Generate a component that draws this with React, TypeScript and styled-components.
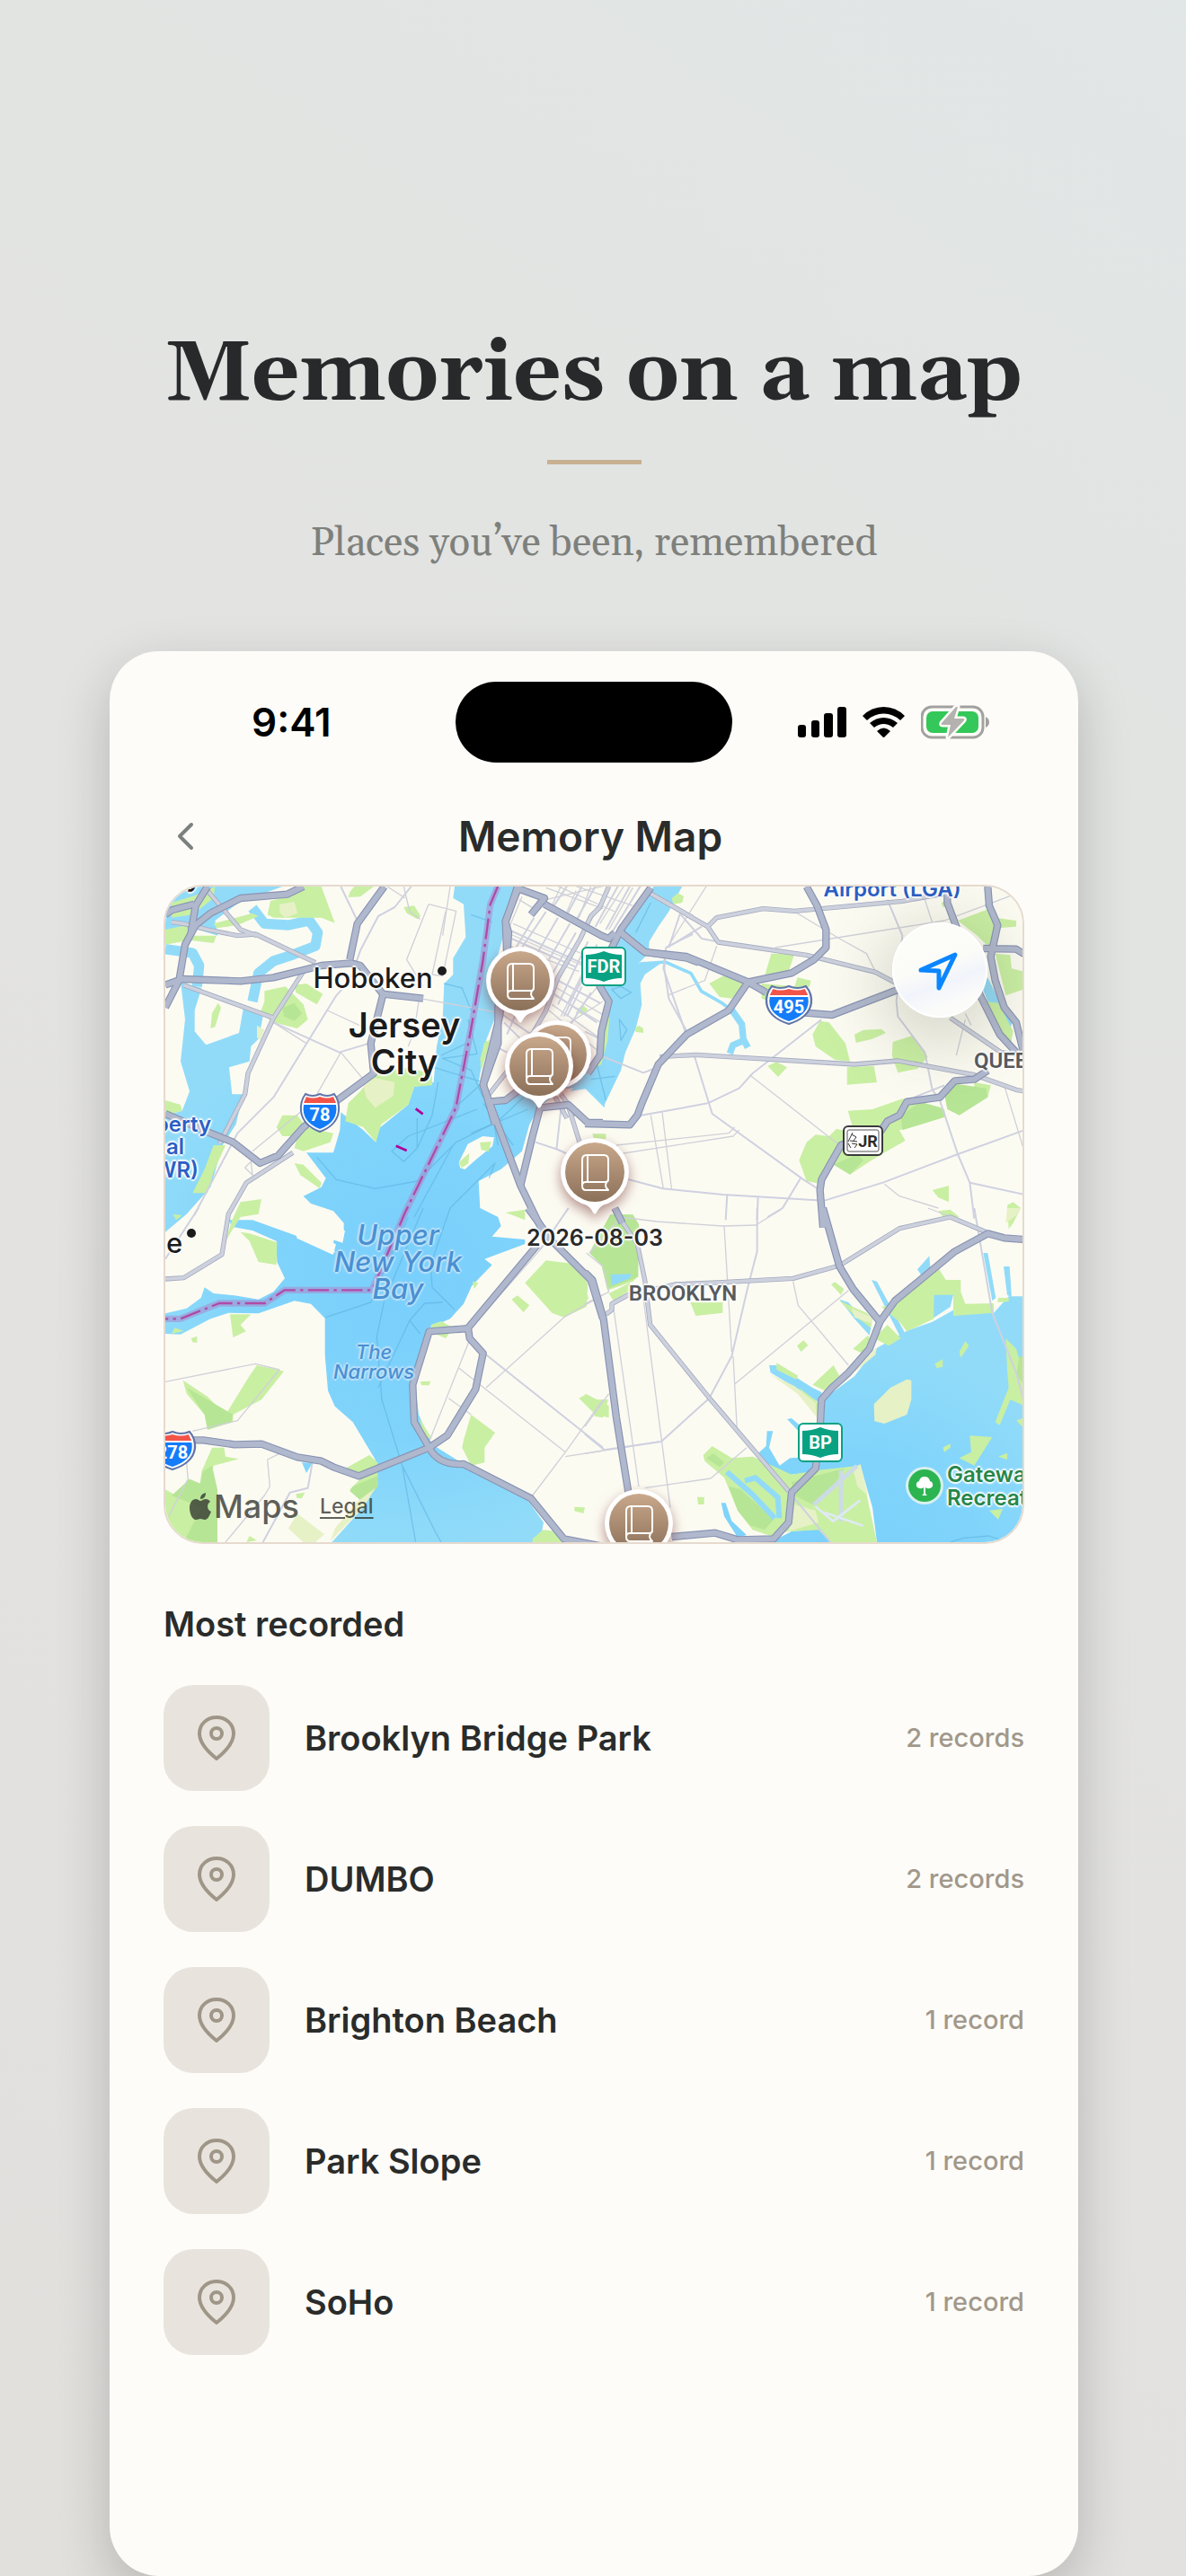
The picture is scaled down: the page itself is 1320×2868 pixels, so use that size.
import React from "react";
import styled, { createGlobalStyle } from "styled-components";

const GlobalStyle = createGlobalStyle`
  *, *::before, *::after { box-sizing: border-box; }
  body {
    margin: 0;
    background: #e3e3e1;
    font-family: Inter, "Liberation Sans", sans-serif;
    color: #2a2c2b;
  }
  button { font: inherit; color: inherit; padding: 0; border: 0; background: none; cursor: pointer; }
  h1, h2, p, ul { margin: 0; padding: 0; }
`;

const Page = styled.div`
  display: flex;
  flex-direction: column;
  min-height: 100vh;
  padding: 0 120px 0 122px;
  background: linear-gradient(215deg, #e1e6e6 0%, #e2e4e2 25%, #e3e3e2 45%, #e2e1df 75%, #e1e0dd 100%);
`;

const Intro = styled.header`
  display: flex;
  flex-direction: column;
  align-items: center;
  padding: 358px 0 90px;
  text-align: center;
`;

const Headline = styled.h1`
  font: 700 94px/120px Georgia, Gelasio, "Liberation Serif", serif;
  color: #28292b;
  white-space: nowrap;
`;

const Rule = styled.hr`
  width: 105px;
  height: 5px;
  margin: 34px 0 58px;
  border: 0;
  background: #c8b091;
`;

const Tagline = styled.p`
  font: 400 44px/60px Georgia, Gelasio, "Liberation Serif", serif;
  color: #7e807c;
`;

const Phone = styled.main`
  flex: 1;
  padding: 34px 60px 60px;
  border-radius: 55px;
  background: #fdfcf8;
  box-shadow: 0 20px 60px rgba(0, 0, 0, 0.2);
`;

const StatusBar = styled.div`
  display: grid;
  grid-template-columns: 1fr 308px 1fr;
  align-items: center;
  height: 90px;
`;

const Clock = styled.time`
  padding-left: 98px;
  font-size: 44px;
  font-weight: 600;
  color: #000;
`;

const Island = styled.div`
  height: 90px;
  border-radius: 45px;
  background: #000;
`;

const StatusIcons = styled.div`
  display: flex;
  align-items: center;
  justify-content: flex-end;
  gap: 18px;
  padding-right: 38px;
`;

const NavBar = styled.nav`
  display: grid;
  grid-template-columns: 48px 1fr 56px;
  align-items: center;
  height: 72px;
  margin: 46px 0 18px;
`;

const BackButton = styled.button`
  display: flex;
  align-items: center;
  justify-content: center;
  height: 72px;
`;

const ScreenTitle = styled.h2`
  font-size: 46px;
  line-height: 72px;
  font-weight: 600;
  text-align: center;
`;

const MapCard = styled.section`
  position: relative;
  height: 734px;
  overflow: hidden;
  border: 2px solid #e6dace;
  border-radius: 44px;
  background: #fcfbf2;
`;

const MapCanvas = styled.svg`
  display: block;
  width: 100%;
  height: 100%;
`;

type Tone = "city" | "district" | "water" | "airport" | "park" | "date";
const toneColor: Record<Tone, string> = {
  city: "#1b1b1b",
  district: "#575b5e",
  water: "#4a90d2",
  airport: "#2b5fc4",
  park: "#26864a",
  date: "#2a2a2a",
};

const MapLabel = styled.span<{ $x: number; $y: number; $size: number; $line: number; $tone: Tone; $anchor?: "start" | "middle" | "end"; $bold?: boolean }>`
  position: absolute;
  left: ${(p) => p.$x}px;
  top: ${(p) => p.$y}px;
  transform: translate(${(p) => (p.$anchor === "start" ? "0" : p.$anchor === "end" ? "-100%" : "-50%")}, -50%);
  font-family: ${(p) => (p.$tone === "district" ? "Roboto, sans-serif" : "Inter, sans-serif")};
  font-size: ${(p) => p.$size}px;
  line-height: ${(p) => p.$line}px;
  font-weight: ${(p) => (p.$bold ? 600 : 500)};
  font-style: ${(p) => (p.$tone === "water" ? "italic" : "normal")};
  color: ${(p) => toneColor[p.$tone]};
  text-align: ${(p) => (p.$anchor === "start" ? "left" : "center")};
  white-space: pre;
  text-shadow: ${(p) => {
    const c = p.$tone === "water" ? "rgba(190,226,248,0.9)" : "rgba(255,255,255,0.85)";
    return `2px 0 1px ${c}, -2px 0 1px ${c}, 0 2px 1px ${c}, 0 -2px 1px ${c}, 0 0 4px ${c}`;
  }};
`;

const CityDot = styled.i<{ $x: number; $y: number }>`
  position: absolute;
  left: ${(p) => p.$x - 5}px;
  top: ${(p) => p.$y - 5}px;
  width: 10px;
  height: 10px;
  border-radius: 50%;
  background: #1b1b1b;
`;

const Marker = styled.button<{ $x: number; $y: number }>`
  position: absolute;
  left: ${(p) => p.$x - 50}px;
  top: ${(p) => p.$y - 50}px;
  width: 100px;
  height: 110px;

  svg { display: block; overflow: visible; filter: drop-shadow(0 6px 7px rgba(110, 40, 40, 0.5)); }
`;

const Sign = styled.svg<{ $x: number; $y: number }>`
  position: absolute;
  left: ${(p) => p.$x}px;
  top: ${(p) => p.$y}px;
  overflow: visible;
  font-family: Roboto, Inter, sans-serif;
  font-weight: 700;
`;

const LocateButton = styled.button`
  position: absolute;
  top: 40px;
  right: 39px;
  display: flex;
  align-items: center;
  justify-content: center;
  width: 106px;
  height: 106px;
  border: 2px solid #ffffff;
  border-radius: 50%;
  background: linear-gradient(160deg, #fdfdf8 0%, #fbfbf8 45%, #f1f4fb 62%, #fbfbfa 80%);
  box-shadow: 0 16px 70px 16px rgba(90, 90, 70, 0.22);
`;

const Attribution = styled.div`
  position: absolute;
  left: 27px;
  bottom: 18px;
  display: flex;
  align-items: center;
  gap: 3px;
  color: rgba(50, 52, 46, 0.78);
`;

const MapsWord = styled.span`
  font-size: 36px;
  line-height: 44px;
  font-weight: 500;
`;

const LegalLink = styled.a`
  margin-left: 20px;
  font-size: 23px;
  line-height: 44px;
  font-weight: 500;
  color: inherit;
  text-underline-offset: 4px;
`;

const SectionTitle = styled.h2`
  margin: 64px 0 43px;
  font-size: 38px;
  line-height: 50px;
  font-weight: 600;
`;

const PlaceList = styled.ul`
  display: flex;
  flex-direction: column;
  gap: 39px;
  list-style: none;
`;

const PlaceRow = styled.li`
  display: flex;
  align-items: center;
  gap: 39px;
`;

const PlaceTile = styled.span`
  display: flex;
  align-items: center;
  justify-content: center;
  width: 118px;
  height: 118px;
  border-radius: 33px;
  background: #e8e4dd;
`;

const PlaceName = styled.span`
  flex: 1;
  font-size: 38px;
  line-height: 50px;
  font-weight: 600;
`;

const PlaceCount = styled.span`
  font-size: 29px;
  line-height: 40px;
  font-weight: 500;
  color: #a1988b;
`;

/* ---------- map data: four survey tiles and a close-up of Manhattan ---------- */

type Tile = {
  offset: [number, number];
  water?: string[];
  creeks?: string[];
  park?: string[];
  wood?: string[];
  sand?: string[];
  ferry?: string[];
  thin?: string[];
  minor?: string[];
  mid?: string[];
  major?: string[];
};

const tiles: Tile[] = [
  {
    offset: [-39, -36],
    water: [
      "M39,36 H430 L360,62 L290,85 L205,150 L215,200 L130,175 L39,200Z",
      "M1005,36 L1000,75 L1035,95 L1042,205 L1000,275 V330 L970,360 L965,480 L945,570 L935,690 L870,705 L850,765 L745,850 L742,890 L700,850 L625,790 L622,850 L600,925 L510,925 L575,1010 L560,1040 L500,1070 L525,1095 L600,1120 L635,1160 V1195 L600,1220 L605,1260 L470,1200 L330,1150 L252,1150 L260,1172 L330,1185 L410,1220 L412,1290 L438,1345 L400,1390 L350,1415 L270,1402 L200,1395 L170,1375 L158,1410 L110,1445 L39,1462 V1530 L90,1532 L190,1480 L250,1460 L350,1462 L470,1420 L525,1430 L572,1478 V1600 L582,1720 L605,1772 L665,1825 L740,1950 L748,2030 L700,2110 L595,2226 H1290 L1302,2160 L1245,2080 L1160,2015 L1040,1968 L930,1900 L885,1800 L870,1670 L920,1510 L990,1480 L1035,1430 L1062,1370 L1130,1300 L1105,1280 L1240,1230 V1215 L1130,1205 L1160,1170 L1150,1140 L1090,1110 L1085,1020 L1160,980 L1230,920 L1255,830 L1290,770 L1370,710 L1440,710 L1505,775 L1520,640 L1400,650 L1290,700 L1180,740 L1130,765 L1085,690 L1110,550 L1150,450 L1140,300 L1165,210 L1165,150 L1210,36Z",
      "M90,355 L160,375 L137,450 V520 L175,565 L285,525 L300,440 L365,470 L350,545 L325,570 L320,620 L252,640 L262,730 L298,730 L275,830 L230,900 L190,1040 L110,1130 L39,1190 V800 L95,785 L120,720 L90,620 L105,480Z",
    ],
    creeks: [
      "M330,108 L370,160 L450,165 L520,150 L548,190 L540,235 L470,262 L400,285 L350,325 L330,420",
      "M39,245 L130,258 L152,300 L145,370",
    ],
    park: [
      "M440,70 L500,36 H560 L605,158 L560,140 L400,140 L380,130 L390,85Z",
      "M655,55 L670,36 H735 L690,70 L650,72Z",
      "M39,180 L110,165 L120,200 L210,200 L200,225 L120,215 L39,230Z",
      "M200,160 L330,125 L350,135 L280,165 L210,175Z",
      "M60,90 L140,65 L205,36 L200,75 L130,130 L60,140Z",
      "M835,105 L870,100 L892,135 L880,145 L845,125Z",
      "M370,385 L440,370 L500,430 L515,480 L480,510 L400,490 L355,460 L370,420Z",
      "M470,365 L510,360 L565,395 L545,430 L475,390Z",
      "M215,425 L225,440 L205,505 L190,510 L195,460Z",
      "M730,670 L830,640 L930,660 V700 L870,705 L850,765 L760,830 L742,890 L700,840 L640,820 L650,760 L690,720Z",
      "M410,840 L430,800 L480,800 L510,840 L600,860 L590,890 L500,920 L470,910 L480,870 L430,870Z",
      "M200,900 L240,900 L200,990 L180,1060 L130,1060 L170,980Z",
      "M470,960 L500,965 L560,1025 L555,1045 L490,1000Z",
      "M290,1090 L360,1080 L350,1130 L290,1140 L240,1220 L262,1150Z",
      "M1110,550 L1120,560 L1095,650 L1090,610Z",
      "M1415,450 L1430,435 L1450,448 L1430,465Z",
      "M39,750 L90,765 L95,785 L39,800Z",
      "M290,1190 L320,1195 L412,1225 L410,1300 L350,1290 L320,1220Z",
    ],
    wood: ["M430,440 L470,425 L495,460 L470,485 L435,470Z"],
    sand: ["M420,95 L470,88 L480,125 L440,140 L422,125Z", "M345,500 L370,515 L355,550 L345,540Z", "M700,700 L740,675 L805,690 L800,735 L740,775 L710,740Z"],
    thin: [
      "M918,95 L1010,118 L965,335 L930,330 L975,118 M918,95 L845,280 L900,370",
      "M990,36 L965,200 M835,36 L855,120 L890,145",
      "M580,450 L720,515 M545,730 L625,590 L700,680 M510,560 L400,490",
      "M885,420 L870,520 L850,570 M890,410 L1140,455",
      "M330,920 L490,790 M305,975 L325,955 L330,1000Z",
      "M780,36 L840,75",
    ],
    minor: [
      "M625,36 L680,150 M860,36 L805,105 L750,135 L690,250 L655,350 L610,400 L520,545 L400,740 L280,860 L135,1135",
      "M400,490 L620,590 L720,560",
      "M1275,890 L1350,915 L1450,960 M1360,780 L1345,915",
    ],
    mid: [
      "M60,155 L100,160 L180,180 L280,200 L340,195 L540,290",
      "M180,50 L290,180 L345,200",
      "M100,365 L400,475 L500,320 M400,475 L315,660 L305,730 L220,895",
      "M465,925 L310,1025 L250,1130 L228,1265 L100,1343 L39,1347",
      "M1385,770 L1425,900",
    ],
    major: [
      "M500,36 L445,62 L290,75 L190,125 L140,165 L105,230 L85,350 L39,440",
      "M180,36 L140,100 L125,190 M39,130 L60,115 L135,95",
      "M39,365 L95,345 L290,352 L400,340 L560,300 L660,292 L690,300 L765,395 L900,410",
      "M770,36 L680,160 L655,280 M765,400 L725,560 L735,660 L620,745 L500,840 L415,935 L355,960 L265,890 L190,860 L39,795",
      "M1215,36 L1175,155 L1185,190 L1178,300 L1150,440 L1150,560 L1100,700 L1225,1035 L1310,1210",
      "M1120,755 L1175,750 L1240,700 M1225,1035 L1265,870 L1290,775 L1385,765 L1450,825 H1500",
    ],
    ferry: [
      "M1060,130 L1130,155 M970,360 L1030,375 L1060,450 M1050,480 L1080,595 L965,610 L1060,650 L1100,740 M960,600 L1045,560 M935,640 L1100,690 L1000,780 M950,690 L930,800 L880,910 V810 M880,910 L835,955 L795,920 L850,870 L1080,780",
      "M545,940 L610,1015 L740,1045 L880,1020 L1010,890 L1150,820 L1235,740 M870,1140 L1000,900 M990,1110 L1140,960 L1120,1010",
      "M1120,740 L1150,900 M1100,760 L1200,900 M1060,860 L1250,780",
    ],
  },
  {
    offset: [1041, -6],
    water: [
      "M590,5 H685 L640,90 L605,140 L575,190 L572,230 L540,262 L620,258 L560,300 L545,330 L550,400 L530,480 L495,560 L480,620 L425,735 L370,680 L310,690 L370,640 L410,590 L430,480 L445,400 L415,340 L440,250 L480,160Z",
    ],
    creeks: [],
    park: ["M650,45 L670,28 L690,38 L685,60 L655,65Z", "M527,480 L540,470 L555,480 V495 L530,492Z", "M338,412 L355,404 L368,415 L350,434 L336,425Z", "M22,530 L42,518 L30,570 L10,610Z", "M425,450 L442,440 L436,520 L415,600 L395,610Z"],
    thin: [
      "M140,50 L190,80 M150,40 L100,160 M230,50 L420,5 M250,70 L280,5 M300,90 L330,20 M340,110 L380,5 M380,120 L440,5 M410,130 L490,5 M440,150 L520,10 M230,10 L420,80 M270,5 L460,90 M330,5 L520,70",
      "M110,165 L420,300 M120,130 L440,270 M110,205 L340,290 M240,330 L430,440 M260,370 L430,470 M250,400 L420,520 M240,420 L410,560",
      "M300,400 L400,250 M330,430 L410,330 M280,440 L370,260 M310,460 L420,390",
    ],
    minor: [
      "M105,150 L350,262 M115,180 L330,275 M190,110 L130,210 M230,90 L150,210 M270,110 L200,230 M310,130 L240,250 M330,160 L250,300",
      "M300,5 L250,80 M350,5 L300,100 M395,5 L330,120 M470,5 L395,140 M510,5 L430,150 M545,5 L450,160",
      "M270,320 L410,395 M250,360 L400,460 M370,190 L270,400 M400,200 L290,440 M350,340 L300,440 M380,360 L310,470",
      "M80,430 L180,500 M90,460 L150,520 M130,430 L100,500 M60,540 L100,560",
      "M410,570 L555,628 L590,615 M630,210 L625,280 L640,380 L700,490 M630,210 L720,165 M680,90 L640,210",
    ],
    mid: ["M440,5 L410,75 L380,105 L345,180 L270,310 L230,420 L150,560 L40,700", "M580,30 L720,110", "M250,690 L300,780 M280,700 L330,770"],
    major: [
      "M60,800 L20,665 L75,440 L100,250 L95,120 L135,18",
      "M135,12 L225,45 L180,100 M225,65 L415,170 L440,180 L460,160",
      "M580,10 L480,150 L440,230 L410,340 L440,390 L415,490 L410,570 L370,630",
      "M480,160 L560,225 L700,245 L740,260",
    ],
    ferry: ["M450,350 L480,340 L515,360 L480,380Z M475,450 L500,485 L480,520Z M580,60 L530,160 M380,650 L460,640 M400,600 L430,720"],
  },
  {
    offset: [1401, -36],
    water: ["M1325,370 L1345,340 L1380,410 L1400,450 L1430,480 L1415,525 L1385,500 L1375,460 L1345,420Z"],
    creeks: [],
    park: [
      "M622,260 H700 L680,320 L620,345 L600,335Z",
      "M415,360 L460,335 L520,345 L530,370 L490,410 L450,405Z",
      "M590,360 L700,370 L710,340 L755,350 L750,370 L620,420 L590,410Z",
      "M760,530 L785,485 L815,490 L870,560 L885,620 L835,615 L770,570Z",
      "M900,530 L930,515 L990,512 L1005,525 L960,545 L905,558Z",
      "M1028,555 L1090,535 L1130,580 L1145,605 L1110,645 L1045,658 L1025,600Z",
      "M610,635 L640,622 L675,640 L645,672Z",
      "M875,640 L965,635 L975,690 L875,698Z",
      "M1245,150 L1350,110 L1370,140 L1440,150 V170 L1380,175 L1350,240 L1310,200Z",
      "M1370,260 L1420,265 L1425,310 L1465,320 V380 L1405,400Z",
      "M1340,420 L1380,425 L1430,520 L1420,570 L1360,480Z",
      "M878,785 L960,780 L1060,745 L1200,780 L1205,805 L1050,850 L1070,885 L1000,925 L950,955 L885,998 L830,960 L790,1030 L740,1020 L715,950 L740,890 L770,865 L815,870 L840,845 L900,860Z",
      "M1300,690 L1355,700 L1345,740 L1300,720Z",
      "M1160,1050 L1215,1035 V1090 L1180,1075Z",
      "M1190,90 L1220,80 V100 L1195,105Z",
      "M25,862 H70 V880 H30Z",
      "M1410,1100 L1430,1090 L1455,1110 L1430,1160 L1415,1180Z",
    ],
    wood: ["M1200,730 L1240,695 L1340,710 L1345,740 L1250,800 L1210,780Z", "M1055,800 L1120,755 L1190,775 L1205,805 L1060,850Z", "M830,965 L910,930 L930,950 L885,998Z"],
    thin: [
      "M405,36 L275,240 M700,120 L850,210 L940,260 L970,320 M440,235 L400,350 L275,400 M635,240 L1200,150 L1467,50",
      "M550,665 L850,900 M220,800 L262,1045 M258,790 L290,1050 M105,900 L480,860 L500,840 M110,930 L495,870 L515,850",
      "M1240,600 L1270,480 M1135,80 L1200,280 M1400,700 L1467,920 M1000,1030 L1050,1070 L1180,1110",
      "M1270,460 L1290,500",
    ],
    minor: [
      "M180,802 L410,760 L515,710 L560,660 L790,480 M365,600 L425,795 L730,1015 L785,1050",
      "M275,240 L390,170 M320,130 L390,210 L440,220 M270,250 L262,310 L335,520",
      "M130,1010 L260,1045 L460,1065 L800,1085 L995,1025 L1245,930 L1467,850 M1245,930 L1285,1025 L1300,1145",
      "M1010,80 L1060,200 L1040,420 L1045,470 L1135,590 L1160,715 L1185,750 L1245,930 M1285,1025 L1467,1065",
      "M475,1065 L470,1150 M578,1070 L575,1150 M720,1010 L660,1110 L610,1140",
      "M1100,740 L1200,700 M0,520 L60,550",
    ],
    mid: [
      "M220,60 L410,170 L440,140 L595,110 L700,118 L1060,85 L1200,60 M410,170 L445,222 L740,265 L970,322 L1060,370",
      "M250,605 L370,598 L900,630 L1045,618 L1300,665 L1440,715 L1467,720",
      "M1220,475 L1390,590 L1467,600",
    ],
    major: [
      "M740,36 L775,100 L805,180 L805,240 L765,280 L690,325 L545,355 L605,390 M545,355 L340,270 L200,255 L120,190",
      "M545,355 L480,450 L340,530 L245,630 L190,760 L175,800 L150,832 L0,828",
      "M700,455 L825,465 L1060,375",
      "M1345,36 L1350,100 L1378,165 L1355,270 L1370,350 L1400,440 L1440,490 L1467,600 M1210,36 V90 L1240,170 L1320,400 L1385,530 L1440,590 M1330,243 L1440,245 L1467,262",
      "M795,1175 L785,1050 L790,1015 L855,900 L990,850 L1010,820 L1050,800 L1075,755 L1185,740 L1235,685 L1300,680 L1345,650",
    ],
  },
  {
    offset: [-39, 1074],
    water: ["M325,580 L365,535 L388,545 L365,600 L335,612Z", "M495,850 L530,852 L510,885Z"],
    park: [
      "M98,575 L180,630 L240,690 L320,560 L345,525 L435,545 L360,640 L265,690 L265,715 L180,740 L170,690 L110,620Z",
      "M255,355 H325 L290,390 L308,412 L265,432Z",
      "M125,435 L145,428 V450 L130,448Z",
      "M60,420 L100,410 L70,400Z",
      "M195,800 L235,800 L240,830 L285,838 L200,860 L190,910 L213,940 V1116 H70 L39,1040 V940 L75,960 L120,905 L155,920 L160,880Z",
      "M640,870 L720,825 L748,850 V930 L700,985 L655,940 L690,905Z",
      "M320,1095 L345,1110 L310,1116Z", "M475,955 L505,950 L495,970 L478,968Z",
      "M1240,250 L1310,175 L1395,185 L1450,250 L1445,330 L1370,365 L1330,350Z",
      "M1195,305 L1215,292 L1255,325 L1235,348Z",
      "M1035,775 L1060,690 L1140,750 L1105,800 L1105,850 L1060,860 L1030,800Z",
      "M885,700 L930,770 L905,765Z", "M890,580 L925,578 L920,592 L895,592Z", "M925,390 L960,378 L1000,400 L975,435 L940,420Z",
      "M1420,635 L1445,622 L1520,660 V700 L1475,690Z", "M1405,998 L1440,1000 L1435,1020 L1405,1012Z",
      "M1265,1105 L1300,1075 L1350,1080 L1370,1116 H1265Z",
      "M1175,15 L1240,5 V40Z", "M1065,245 L1085,250 L1070,270Z", "M65,20 L95,25 L75,40Z",
    ],
    wood: ["M665,930 L748,895 V930 L700,985 L655,945Z", "M60,960 L120,905 L155,920 L165,880 L195,860 L213,940 V1116 H100 L160,1000Z", "M110,600 L180,640 L265,690 L260,715 L180,740 L170,690Z"],
    sand: ["M450,1070 L480,1020 L570,1090 L540,1116 H500Z", "M740,935 L700,1000 L590,1112 L605,1070 L680,980Z"],
    thin: [
      "M39,580 L340,520 L420,540 L280,710 L130,745 M110,850 L115,905 L50,1030 M420,820 L380,840 L388,930 L370,960 L240,1116",
      "M1290,140 L1060,400 M1055,440 L920,780 M1020,535 L1375,815 L1265,960 M985,635 L1060,690 M1375,830 L1500,810 M1110,600 L1370,365 L1500,290 M1375,815 L1500,640",
    ],
    minor: ["M530,850 L515,935 L455,950 L365,1116", "M150,0 L39,170", "M1110,490 L1500,800", "M1385,0 L1290,140"],
    major: [
      "M130,775 L165,775 L270,790 L360,788 L480,832 L560,845 L600,865 L685,895 L920,800 L980,760 L1075,605 L1100,485 L1055,435 L1050,400 L1280,125",
      "M920,800 L870,715 L865,590 L920,412 L1055,402",
      "M920,800 Q950,860 1035,855 L1260,970 L1370,1105 L1500,1130",
      "M1250,0 L1330,110 L1460,240 L1500,370",
    ],
    ferry: ["M575,365 L725,315 L850,30 M900,0 L770,310 L745,430 L762,640 L830,860 L940,1080 L960,1116 M830,860 L875,1116 M990,0 L925,190 L930,265 L1005,340 M890,420 L855,375 L905,318 L965,315 M855,375 L750,600"],
  },
  {
    offset: [1401, 1074],
    water: [
      "M780,655 L820,620 L900,562 L970,470 L1075,410 L1160,380 L1240,335 L1365,350 L1415,295 H1467 V1116 H975 L960,1000 L920,860 L780,880 L690,890 L640,885 L600,855 L575,822 L605,795 L608,745 H628 L615,800 L650,860 L685,835 L790,830Z",
      "M620,1116 L690,1080 L790,1072 L825,1116Z",
      "M1110,205 L1150,160 L1155,220 L1200,260 L1235,270 L1220,330 L1160,370 L1165,290 L1120,220Z",
      "M1330,150 H1345 L1372,300 L1360,310Z", "M1398,195 H1418 L1425,300 L1410,290Z",
      "M85,222 L155,220 L150,235 L90,258Z",
      "M615,525 L640,525 L760,600 L790,615 V655 L720,610 L620,550Z",
      "M675,705 L690,702 L740,745 L710,742Z",
      "M850,305 L880,315 L955,400 L950,425 L900,370Z", "M957,240 L975,245 L1070,420 L1050,425Z",
      "M455,985 H470 L490,1045 L540,1092 L510,1100 L465,1030Z",
    ],
    creeks: [],
    park: [
      "M85,22 L160,22 L180,55 L175,230 L160,245 L75,275 L55,190 L15,150Z", "M80,285 L150,250 V275 L95,310Z",
      "M352,315 H460 V350 L370,360Z", "M822,255 L835,247 L865,270 L855,290Z", "M708,460 L730,442 L745,458 L722,480Z",
      "M1180,10 L1220,5 L1250,30 L1200,35Z",
      "M1040,320 L1180,200 L1205,240 H1255 V280 L1270,320 L1365,318 V350 L1230,360 V290 L1165,290 L1165,370 L1075,412 L1050,380 L990,330Z",
      "M1380,300 H1415 V312 L1378,315Z",
      "M980,420 L1010,390 L1055,435 L1015,460 L975,440Z",
      "M895,470 L945,425 L960,450 L935,490Z", "M760,590 L830,525 L850,560 L800,610Z", "M640,517 L712,560 L705,572 L640,540Z",
      "M850,310 L940,350 L960,370 L955,400 L900,360Z",
      "M715,600 L780,650 V700 L750,650Z",
      "M395,825 L425,795 L490,835 L560,830 L690,890 L780,875 L920,860 L975,1116 H820 L780,1075 L680,1080 L620,1095 L560,1075 L510,1010 L465,900 L400,845Z",
      "M375,965 H398 V990 H378Z",
      "M1405,435 L1440,470 L1467,560 V660 L1420,640 L1385,725 L1370,715 L1415,600 L1410,540Z",
      "M1285,760 L1360,765 L1300,860 L1250,835 L1290,815Z", "M1168,520 L1195,505 V530 L1175,535Z", "M1270,445 L1282,460 L1255,500 L1250,480Z", "M1195,800 L1220,787 V800 L1200,815Z", "M1380,830 L1410,818 V840Z", "M1350,1010 L1395,1005 L1380,1040Z",
      "M0,620 L30,640 L78,640 L60,700 L30,695 L45,665 L0,650Z",
      "M0,270 L12,300 L0,320Z", "M1440,710 L1467,700 V735Z",
    ],
    wood: ["M85,22 L160,22 L180,55 L178,230 L75,270 L55,190 L15,150Z", "M690,915 L865,870 L830,930 L760,990 L700,960Z", "M480,930 L520,940 L630,1040 L600,1075 L550,1060 L510,1010Z", "M405,835 L430,820 L465,850 L450,865Z", "M1450,500 L1467,490 V590 L1440,560Z"],
    sand: [
      "M965,655 L1020,600 L1075,572 L1090,575 V640 L1075,690 L1000,720 L967,712Z",
      "M890,335 L960,365 L955,385 L900,365Z", "M618,555 L700,595 L770,650 L775,700 L710,620Z", "M700,990 L770,1010 L780,1050 L680,1080Z",
      "M1410,0 L1455,0 L1440,25 L1405,50Z", "M895,870 L920,855 L945,960 L910,930Z", "M840,610 L975,465 L970,490 L880,565Z",
    ],
    thin: [
      "M95,330 L180,930 M195,300 L285,1000 M490,480 L465,60 M495,495 L508,740 M500,588 L880,275 M695,245 L712,325 L880,525 M0,820 L250,780 M200,935 L420,903 L540,800",
      "M15,150 L120,30 L240,45 L460,60 L570,57 L655,5 M5,150 L60,195 L80,280 L0,320 M0,730 L80,620 M1145,0 L1340,75",
    ],
    minor: ["M575,0 V145 L545,260 L490,495 L415,635 L255,780 L65,808 L0,755", "M1300,0 L1360,350 L1440,550 L1467,650", "M700,970 L820,1116"],
    mid: ["M70,355 L90,340 V320 L145,290 L300,255 L460,248 L695,235 L850,192 L1050,68 L1220,30 L1340,80", "M100,10 L175,120 L200,240 L218,390 L420,640 L680,945"],
    major: [
      "M0,215 L25,240 L62,370 L105,700 L150,980",
      "M795,0 L850,195 L895,270 L985,380",
      "M1467,105 L1400,100 L1345,85 L1235,145 L1035,310 L985,380 L950,470 L880,550 L825,600 L790,640 L785,740 L770,870 L690,950 L680,1050 L630,1105 L510,1108 L435,1085 L290,1098",
      "M100,0 L125,50",
    ],
    ferry: ["M1220,1116 L1265,1102 L1350,1095 L1395,1112"],
  },
];

type LayerKey = Exclude<keyof Tile, "offset">;

const Layer = ({ name, ...paint }: { name: LayerKey } & React.SVGProps<SVGGElement>) => (
  <g fill="none" strokeLinejoin="round" {...paint}>
    {tiles.map((t, i) => (
      <g key={i} transform={`translate(${t.offset[0]} ${t.offset[1]})`}>
        {(t[name] || []).map((d, k) => (
          <path key={k} d={d} />
        ))}
      </g>
    ))}
  </g>
);

const boundary =
  "M1110,0 L1085,60 L1060,250 L1020,480 L970,740 L800,1090 L690,1348 H398 L332,1392 H180 L50,1444 H0";

const MapArt = () => (
  <MapCanvas viewBox="0 0 2862 2190" preserveAspectRatio="xMidYMid slice" role="img" aria-label="Map of New York Bay">
    <defs>
      <radialGradient id="deep" gradientUnits="userSpaceOnUse" cx="850" cy="1350" r="900">
        <stop offset="0" stopColor="#79cffc" />
        <stop offset="0.6" stopColor="#80d4fb" />
        <stop offset="1" stopColor="#91dbf9" />
      </radialGradient>
    </defs>
    <rect width="2868" height="2196" fill="#fcfbf2" />
    <Layer name="water" fill="url(#deep)" />
    <Layer name="creeks" stroke="#91dbf9" strokeWidth="34" />
    <path d="M1585,258 L1670,252 L1755,290 L1790,350 L1860,390 L1905,425" fill="none" stroke="#91dbf9" strokeWidth="11" />
    <path d="M1890,410 L1925,460 L1930,510 L1945,538 M1930,515 L1895,530 L1885,558" fill="none" stroke="#91dbf9" strokeWidth="22" />
    <path d="M980,922 L1010,860 L1060,834 L1098,838 L1092,868 L1040,910 L1000,945 L985,940Z" fill="#fcfbf2" />
    <path d="M1050,855 L1088,852 L1080,885 L1055,880Z M980,922 L1015,890 L1012,925 L990,940Z" fill="#c9efa3" />
    <path d="M410,1070 L600,1150 L592,1190 L560,1180 L400,1100Z M430,1140 L570,1195 L560,1230 L440,1175Z" fill="#fcfbf2" />
    <Layer name="park" fill="#c9efa3" />
    <Layer name="wood" fill="#b7e596" />
    <Layer name="sand" fill="#e7f1c6" />
    <path d="M1486,1296 L1556,1294 L1551,1309 L1491,1332Z" fill="#91dbf9" />
    <g fill="none" stroke="#91dbf9" strokeWidth="18">
      <path d="M1875,1955 L1960,2030 L2035,2110 M1935,1985 L1970,1975 L2045,2040 L2050,2110" />
    </g>
    <g fill="none" stroke="#ccdbe6" strokeWidth="14">
      <path d="M2256,1950 V2120 M2165,2065 L2310,1935" />
      <path d="M2170,2070 L2230,2120 L2320,2050 M2200,2090 L2330,2135" stroke="#dfeaf2" strokeWidth="8" />
    </g>
    <Layer name="ferry" stroke="#5aaede" strokeOpacity="0.55" strokeWidth="4" />
    <Layer name="thin" stroke="#d0d1d9" strokeWidth="4" />
    <Layer name="minor" stroke="#cfd1e0" strokeWidth="6" />
    <Layer name="mid" stroke="#a4abc0" strokeWidth="16" />
    <Layer name="mid" stroke="#cdd1dd" strokeWidth="11" />
    <Layer name="major" stroke="#8994b2" strokeWidth="25" />
    <Layer name="major" stroke="#b0b8ce" strokeWidth="18" />
    <path d={boundary} fill="none" stroke="#a78fd0" strokeOpacity="0.6" strokeWidth="22" />
    <path d={boundary} fill="none" stroke="#b04aa8" strokeWidth="7" strokeDasharray="70 16 10 16" />
    <g stroke="#b0009a" strokeWidth="8">
      <path d="M836,742 L860,760" />
      <path d="M770,866 L806,882" />
    </g>
  </MapCanvas>
);

const markers: [number, number, string][] = [
  [395, 105, "SoHo"],
  [436, 187, "DUMBO"],
  [416, 200, "Brooklyn Bridge Park"],
  [478, 318, "Park Slope, 2026-08-03"],
  [527, 709, "Brighton Beach"],
];

const MemoryMarker = ({ x, y, label }: { x: number; y: number; label: string }) => (
  <Marker $x={x} $y={y} aria-label={label}>
    <svg width="100" height="110" viewBox="-50 -50 100 110">
      <defs>
        <linearGradient id="leather" x1="0" y1="0" x2="0" y2="1">
          <stop offset="0" stopColor="#c9a88b" />
          <stop offset="1" stopColor="#8b7059" />
        </linearGradient>
      </defs>
      <path d="M-14,34 Q-5,38 -2,45 Q0,48 2,45 Q5,38 14,34Z" fill="#fff" />
      <circle r="38" fill="#fff" />
      <circle r="33" fill="url(#leather)" />
      <g fill="none" stroke="#fff" strokeWidth="2" strokeLinecap="round" strokeLinejoin="round">
        <path d="M-14,15 V-14 Q-14,-19 -9,-19 H10 Q15,-19 15,-14 V8 Q15,11 12,11 H-10 Q-14,11 -14,15 Q-14,20 -10,20 H15 Q12,17 12,15 Q12,12 14,10" />
        <path d="M-8,-19 V11" />
      </g>
    </svg>
  </Marker>
);

const Interstate = ({ x, y, w, n }: { x: number; y: number; w: number; n: string }) => (
  <Sign $x={x} $y={y} width={w} height="44" viewBox={`0 0 ${w} 44`}>
    <g transform={`scale(${w / 44} 1)`}>
      <path d="M6,1 Q14,5 22,1 Q30,5 38,1 Q44,9 43,20 Q41,36 22,43 Q3,36 1,20 Q0,9 6,1Z" fill="#fff" stroke="#6076a8" strokeWidth="2" />
      <path d="M7,4 Q14,7 22,4 Q30,7 37,4 L40,11 H4Z" fill="#f2544a" />
      <path d="M4,13 H40 Q43,32 22,40 Q1,32 4,13Z" fill="#147cf8" />
    </g>
    <text x={w / 2} y="31" textAnchor="middle" fontSize="20" fill="#fff">{n}</text>
  </Sign>
);

const Parkway = ({ x, y, n }: { x: number; y: number; n: string }) => (
  <Sign $x={x} $y={y} width="50" height="44" viewBox="0 0 50 44">
    <rect x="1" y="1" width="48" height="42" rx="5" fill="#fff" stroke="#08a283" strokeWidth="2" />
    <path d="M5,9 Q15,9 25,5 Q35,9 45,9 V35 Q35,35 25,39 Q15,35 5,35Z" fill="#08a283" />
    <text x="25" y="29" textAnchor="middle" fontSize="20" fill="#fff">{n}</text>
  </Sign>
);

const labels: { text: string; x: number; y: number; size: number; line?: number; tone: Tone; anchor?: "start" | "end"; bold?: boolean }[] = [
  { text: "y", x: 32, y: -12, size: 31, tone: "city" },
  { text: "Hoboken", x: 231, y: 102, size: 31, tone: "city" },
  { text: "Jersey\nCity", x: 266, y: 175, size: 38, line: 41, tone: "city", bold: true },
  { text: "e", x: 1, y: 397, size: 31, tone: "city", anchor: "start" },
  { text: "Liberty", x: 51, y: 265, size: 24, tone: "airport", anchor: "end", bold: true },
  { text: "International", x: 21, y: 290, size: 24, tone: "airport", anchor: "end", bold: true },
  { text: "(EWR)", x: 37, y: 316, size: 24, tone: "airport", anchor: "end", bold: true },
  { text: "Upper\nNew York\nBay", x: 259, y: 418, size: 31, line: 30, tone: "water" },
  { text: "The\nNarrows", x: 232, y: 529, size: 22, line: 22, tone: "water" },
  { text: "Airport (LGA)", x: 809, y: 3, size: 24, tone: "airport", bold: true },
  { text: "QUEENS", x: 900, y: 194, size: 24, tone: "district", anchor: "start", bold: true },
  { text: "BROOKLYN", x: 576, y: 453, size: 24, tone: "district", bold: true },
  { text: "2026-08-03", x: 478, y: 391, size: 25, tone: "date", bold: true },
  { text: "Gateway\nRecreation", x: 870, y: 668, size: 24, line: 26, tone: "park", anchor: "start", bold: true },
];

const places = [
  { name: "Brooklyn Bridge Park", records: 2 },
  { name: "DUMBO", records: 2 },
  { name: "Brighton Beach", records: 1 },
  { name: "Park Slope", records: 1 },
  { name: "SoHo", records: 1 },
];

const SignalIcon = () => (
  <svg width="54" height="34" viewBox="0 0 54 34" aria-hidden="true">
    <rect x="0" y="20" width="9" height="14" rx="3" />
    <rect x="15" y="15" width="9" height="19" rx="3" />
    <rect x="29" y="7" width="10" height="27" rx="3" />
    <rect x="44" y="0" width="10" height="34" rx="3" />
  </svg>
);

const WifiIcon = () => (
  <svg width="47" height="34" viewBox="0 0 47 34" aria-hidden="true">
    <path d="M0,10 Q10,0 23.500,0 Q37,0 47,10 L42,15 Q34,7.500 23.500,7.500 Q13,7.500 5,15Z" />
    <path d="M8,18 Q15,12 23.500,12 Q32,12 39,18 L34,23 Q29,19 23.500,19 Q18,19 13,23Z" />
    <path d="M16,27 Q23.500,20 31,27 L24.500,33.500 Q23.500,34.500 22.500,33.500Z" />
  </svg>
);

const BatteryIcon = () => (
  <svg width="77" height="38" viewBox="0 0 77 38" aria-hidden="true">
    <rect x="1" y="2" width="68" height="34" rx="11" fill="none" stroke="#a2a19f" strokeWidth="3" />
    <path d="M72,13 Q76,15 76,19 Q76,23 72,25Z" fill="#a2a19f" />
    <rect x="6" y="7" width="58" height="24" rx="7" fill="#34c759" />
    <path d="M39,2 L23,20 Q22,22 24,22 H33 L30,36 L48,17 Q49,15 47,15 H37 L41,2Z" fill="none" stroke="#fdfcf8" strokeWidth="5" strokeLinejoin="round" />
    <path d="M39,2 L23,20 Q22,22 24,22 H33 L30,36 L48,17 Q49,15 47,15 H37 L41,2Z" fill="#b3b2af" />
  </svg>
);

const PlacePin = () => (
  <svg width="44" height="52" viewBox="0 0 44 52" fill="none" stroke="#9f9688" strokeWidth="4" aria-hidden="true">
    <path d="M22,49 C12,41 3,31 3,21 C3,10 12,3 22,3 C32,3 41,10 41,21 C41,31 32,41 22,49Z" strokeLinejoin="round" />
    <circle cx="22" cy="21" r="6" />
  </svg>
);

export default function App() {
  return (
    <>
      <GlobalStyle />
      <Page>
        <Intro>
          <Headline>Memories on a map</Headline>
          <Rule />
          <Tagline>Places you’ve been, remembered</Tagline>
        </Intro>
        <Phone>
          <StatusBar>
            <Clock>9:41</Clock>
            <Island />
            <StatusIcons>
              <SignalIcon />
              <WifiIcon />
              <BatteryIcon />
            </StatusIcons>
          </StatusBar>
          <NavBar>
            <BackButton aria-label="Back">
              <svg width="20" height="32" viewBox="0 0 20 32" fill="none" stroke="#7b817e" strokeWidth="4" strokeLinecap="round" strokeLinejoin="round">
                <path d="M17,3 L4,16 L17,29" />
              </svg>
            </BackButton>
            <ScreenTitle>Memory Map</ScreenTitle>
          </NavBar>
          <MapCard>
            <MapArt />
            {labels.map((l) => (
              <MapLabel key={l.text} $x={l.x} $y={l.y} $size={l.size} $line={l.line ?? 30} $tone={l.tone} $anchor={l.anchor} $bold={l.bold}>
                {l.text}
              </MapLabel>
            ))}
            <CityDot $x={308} $y={94} />
            <CityDot $x={29} $y={386} />
            <Interstate x={150} y={230} w={44} n="78" />
            <Interstate x={668} y={110} w={52} n="495" />
            <Interstate x={-18} y={606} w={52} n="278" />
            <Parkway x={463} y={67} n="FDR" />
            <Parkway x={704} y={597} n="BP" />
            <Sign $x={754} $y={266} width="45" height="34" viewBox="0 0 45 34">
              <rect x="1" y="1" width="43" height="32" rx="5" fill="#fff" stroke="#3a3a3a" strokeWidth="2" />
              <rect x="5" y="5" width="35" height="24" rx="2" fill="none" stroke="#555" strokeWidth="1" />
              <path d="M6,18 L11,8 M10,10 L15,13 L12,17 M6,20 L9,25 M10,20 L16,21 L13,25 M8,17 L16,18" fill="none" stroke="#333" strokeWidth="1" />
              <text x="28" y="24" textAnchor="middle" fontSize="18" fill="#2b2b2b">JR</text>
            </Sign>
            <Sign $x={823} $y={645} width="44" height="44" viewBox="-22 -22 44 44">
              <circle r="21" fill="#d9f0ee" />
              <circle r="18" fill="#2cb450" />
              <path d="M-9,1 Q-10,-4 -6,-5 Q-5,-10 0,-10 Q5,-10 6,-5 Q10,-4 9,1 Q5,5 1,2 L1,9 L3,11 H-3 L-1,9 L-1,2 Q-5,5 -9,1Z" fill="#fff" />
            </Sign>
            {markers.map(([x, y, label]) => (
              <MemoryMarker key={label} x={x} y={y} label={label} />
            ))}
            <LocateButton aria-label="Centre on my location">
              <svg width="50" height="50" viewBox="-25 -25 50 50" fill="none" stroke="#0a86ff" strokeWidth="5" strokeLinejoin="round">
                <path d="M17,-17 L-1,20 V1 L-21,0Z" />
              </svg>
            </LocateButton>
            <Attribution>
              <svg width="24" height="31" viewBox="0 0 24 31" fill="currentColor" aria-hidden="true">
                <path d="M12,9 C14,9 15,7 18,7 C20,7 22,8 23,10 C19,12 19,19 24,21 C22,26 20,30 17,30 C15,30 14,29 12,29 C10,29 9,30 7,30 C3,30 0,23 0,17 C0,11 3,7 7,7 C9,7 11,9 12,9Z" />
                <path d="M12,7 C12,3 14,1 18,0 C18,4 16,7 12,7Z" />
              </svg>
              <MapsWord>Maps</MapsWord>
              <LegalLink href="#legal">Legal</LegalLink>
            </Attribution>
          </MapCard>
          <SectionTitle>Most recorded</SectionTitle>
          <PlaceList>
            {places.map((p) => (
              <PlaceRow key={p.name}>
                <PlaceTile>
                  <PlacePin />
                </PlaceTile>
                <PlaceName>{p.name}</PlaceName>
                <PlaceCount>{p.records === 1 ? "1 record" : `${p.records} records`}</PlaceCount>
              </PlaceRow>
            ))}
          </PlaceList>
        </Phone>
      </Page>
    </>
  );
}
